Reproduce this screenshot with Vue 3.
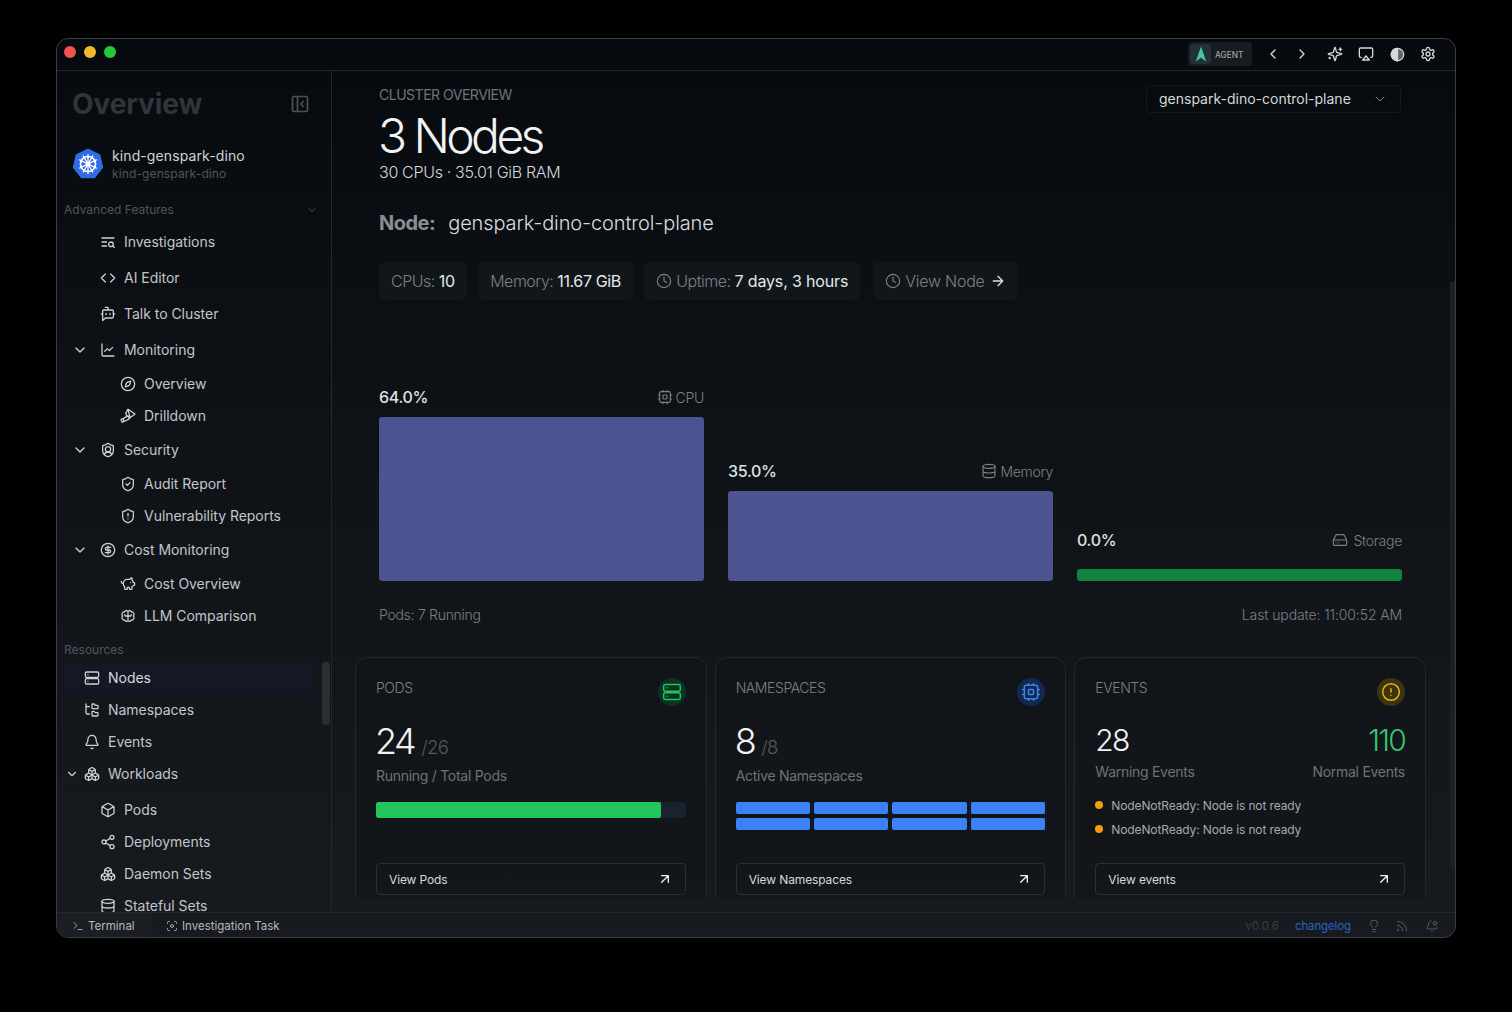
<script setup>
const I = {
  panel: '<rect x="3" y="3" width="18" height="18" rx="2"/><path d="M9 3v18M16 15l-3-3 3-3"/>',
  listSearch: '<path d="M3 6h18M3 12h7M3 18h7"/><circle cx="16.5" cy="15.5" r="3.5"/><path d="M19 18l2.5 2.5"/>',
  code: '<path d="M8 6l-6 6 6 6M16 6l6 6-6 6"/>',
  bot: '<path d="M12 6V2H8M8 18l-4 4V8a2 2 0 0 1 2-2h12a2 2 0 0 1 2 2v8a2 2 0 0 1-2 2ZM2 12h2M9 11v2M15 11v2M20 12h2"/>',
  chart: '<path d="M3 3v16a2 2 0 0 0 2 2h16M7 14l4-4 3 3 5-5"/>',
  compass: '<circle cx="12" cy="12" r="10"/><path d="M16.24 7.76l-1.804 5.411a2 2 0 0 1-1.265 1.265L7.76 16.24l1.804-5.411a2 2 0 0 1 1.265-1.265z"/>',
  telescope: '<path d="M1.500 17l1.500 4.500 3-1.200-1.500-4.400zM4.500 16l1.500 4.300 8-4-2-4.500zM10 11.500L8.500 8 12 2l10.500 7-7.500 5.500z"/><path d="M12 2l3 12.500"/>',
  shieldUser: '<path d="M20 13c0 5-3.500 7.500-7.660 8.950a1 1 0 0 1-.670-.010C7.500 20.500 4 18 4 13V6a1 1 0 0 1 1-1c2 0 4.500-1.200 6.240-2.720a1.170 1.170 0 0 1 1.520 0C14.510 3.810 17 5 19 5a1 1 0 0 1 1 1zM6.376 18.910a6 6 0 0 1 11.249.003"/><circle cx="12" cy="11" r="4"/>',
  shieldCheck: '<path d="M20 13c0 5-3.500 7.500-7.660 8.950a1 1 0 0 1-.670-.010C7.500 20.500 4 18 4 13V6a1 1 0 0 1 1-1c2 0 4.500-1.200 6.240-2.720a1.170 1.170 0 0 1 1.520 0C14.510 3.810 17 5 19 5a1 1 0 0 1 1 1zM9 12l2 2 4-4"/>',
  shieldAlert: '<path d="M20 13c0 5-3.500 7.500-7.660 8.950a1 1 0 0 1-.670-.010C7.500 20.500 4 18 4 13V6a1 1 0 0 1 1-1c2 0 4.500-1.200 6.240-2.720a1.170 1.170 0 0 1 1.520 0C14.510 3.810 17 5 19 5a1 1 0 0 1 1 1zM12 8v4M12 16h.01"/>',
  dollar: '<circle cx="12" cy="12" r="10"/><path d="M16 8h-6a2 2 0 1 0 0 4h4a2 2 0 1 1 0 4H8M12 18V6"/>',
  piggy: '<path d="M11 17h3v2a1 1 0 0 0 1 1h2a1 1 0 0 0 1-1v-3a3.160 3.160 0 0 0 2-2h1a1 1 0 0 0 1-1v-2a1 1 0 0 0-1-1h-1a5 5 0 0 0-2-4V3a4 4 0 0 0-3.200 1.600l-.3.4H11a6 6 0 0 0-6 6v1a5 5 0 0 0 2 4v3a1 1 0 0 0 1 1h2a1 1 0 0 0 1-1zM16 10h.01M2 8v1a2 2 0 0 0 2 2h1"/>',
  brain: '<path d="M12 5a3 3 0 0 0-5 1 3.500 3.500 0 0 0-3 6 3.500 3.500 0 0 0 3 6 3 3 0 0 0 5 1 3 3 0 0 0 5-1 3.500 3.500 0 0 0 3-6 3.500 3.500 0 0 0-3-6 3 3 0 0 0-5-1ZM12 5v14M12 12H8M12 12h4M8 12l-1-2M16 12l1-2"/>',
  server: '<rect x="2" y="3" width="20" height="8" rx="2"/><rect x="2" y="13" width="20" height="8" rx="2"/><path d="M6 7h.01M6 17h.01"/>',
  tree: '<path d="M20 10a1 1 0 0 0 1-1V6a1 1 0 0 0-1-1h-2.500a1 1 0 0 1-.8-.4l-.9-1.200A1 1 0 0 0 15 3h-2a1 1 0 0 0-1 1v5a1 1 0 0 0 1 1ZM20 21a1 1 0 0 0 1-1v-3a1 1 0 0 0-1-1h-2.900a1 1 0 0 1-.880-.550l-.420-.850a1 1 0 0 0-.920-.6H13a1 1 0 0 0-1 1v5a1 1 0 0 0 1 1ZM3 5a2 2 0 0 0 2 2h3M3 3v13a2 2 0 0 0 2 2h3"/>',
  bell: '<path d="M10.268 21a2 2 0 0 0 3.464 0M3.262 15.326A1 1 0 0 0 4 17h16a1 1 0 0 0 .74-1.673C19.410 13.956 18 12.499 18 8A6 6 0 0 0 6 8c0 4.499-1.411 5.956-2.738 7.326"/>',
  boxes: '<path d="M2.970 12.920A2 2 0 0 0 2 14.630v3.240a2 2 0 0 0 .97 1.710l3 1.800a2 2 0 0 0 2.060 0L12 19v-5.500l-5-3-4.030 2.420ZM7 16.500l-4.740-2.850M7 16.500l5-3M7 16.500v5.170M12 13.500V19l3.970 2.380a2 2 0 0 0 2.060 0l3-1.800a2 2 0 0 0 .97-1.710v-3.240a2 2 0 0 0-.97-1.710L17 10.500l-5 3ZM17 16.500l-5-3M17 16.500l4.740-2.850M17 16.500v5.170M7.970 4.420A2 2 0 0 0 7 6.130v4.370l5 3 5-3V6.130a2 2 0 0 0-.97-1.710l-3-1.800a2 2 0 0 0-2.060 0l-3 1.800ZM12 8L7.260 5.150M12 8l4.740-2.850M12 13.500V8"/>',
  box: '<path d="M21 8a2 2 0 0 0-1-1.730l-7-4a2 2 0 0 0-2 0l-7 4A2 2 0 0 0 3 8v8a2 2 0 0 0 1 1.730l7 4a2 2 0 0 0 2 0l7-4A2 2 0 0 0 21 16ZM3.300 7l8.700 5 8.700-5M12 22V12"/>',
  share: '<circle cx="18" cy="5" r="3"/><circle cx="6" cy="12" r="3"/><circle cx="18" cy="19" r="3"/><path d="M8.590 13.510l6.830 3.980M15.410 6.510l-6.820 3.980"/>',
  db: '<ellipse cx="12" cy="5" rx="9" ry="3"/><path d="M3 5v14a9 3 0 0 0 18 0V5M3 12a9 3 0 0 0 18 0"/>',
  cpu: '<rect x="4" y="4" width="16" height="16" rx="2"/><rect x="9" y="9" width="6" height="6" rx="1"/><path d="M15 2v2M15 20v2M2 15h2M2 9h2M20 15h2M20 9h2M9 2v2M9 20v2"/>',
  drive: '<path d="M22 12H2M5.450 5.110L2 12v6a2 2 0 0 0 2 2h16a2 2 0 0 0 2-2v-6l-3.450-6.890A2 2 0 0 0 16.760 4H7.240a2 2 0 0 0-1.790 1.110zM6 16h.01M10 16h.01"/>',
  clock: '<circle cx="12" cy="12" r="10"/><path d="M12 6v6l4 2"/>',
  right: '<path d="M5 12h14M12 5l7 7-7 7"/>',
  upRight: '<path d="M7 7h10v10M7 17L17 7"/>',
  alert: '<circle cx="12" cy="12" r="10"/><path d="M12 8v4M12 16h.01"/>',
  down: '<path d="M6 9l6 6 6-6"/>',
  chevL: '<path d="M15 18l-6-6 6-6"/>',
  chevR: '<path d="M9 18l6-6-6-6"/>',
  sparkles: '<path d="M9.937 15.500A2 2 0 0 0 8.500 14.063l-6.135-1.582a.5.5 0 0 1 0-.962L8.500 9.936A2 2 0 0 0 9.937 8.500l1.582-6.135a.5.5 0 0 1 .963 0L14.063 8.500A2 2 0 0 0 15.500 9.937l6.135 1.581a.5.5 0 0 1 0 .964L15.500 14.063a2 2 0 0 0-1.437 1.437l-1.582 6.135a.5.5 0 0 1-.963 0zM20 3v4M22 5h-4M4 17v2M5 18H3"/>',
  airplay: '<path d="M5 17H4a2 2 0 0 1-2-2V5a2 2 0 0 1 2-2h16a2 2 0 0 1 2 2v10a2 2 0 0 1-2 2h-1M12 15l5 6H7Z"/>',
  contrast: '<circle cx="12" cy="12" r="10" fill="currentColor" fill-opacity=".45"/><path d="M12 2a10 10 0 0 0 0 20z" fill="currentColor"/>',
  gear: '<path d="M12.220 2h-.44a2 2 0 0 0-2 2v.18a2 2 0 0 1-1 1.730l-.43.25a2 2 0 0 1-2 0l-.15-.08a2 2 0 0 0-2.730.73l-.22.38a2 2 0 0 0 .73 2.730l.15.1a2 2 0 0 1 1 1.720v.51a2 2 0 0 1-1 1.740l-.15.09a2 2 0 0 0-.73 2.730l.22.38a2 2 0 0 0 2.730.73l.15-.08a2 2 0 0 1 2 0l.43.25a2 2 0 0 1 1 1.730V20a2 2 0 0 0 2 2h.44a2 2 0 0 0 2-2v-.18a2 2 0 0 1 1-1.730l.43-.25a2 2 0 0 1 2 0l.15.08a2 2 0 0 0 2.730-.73l.22-.39a2 2 0 0 0-.73-2.730l-.15-.08a2 2 0 0 1-1-1.740v-.5a2 2 0 0 1 1-1.740l.15-.09a2 2 0 0 0 .73-2.730l-.22-.38a2 2 0 0 0-2.730-.73l-.15.08a2 2 0 0 1-2 0l-.43-.25a2 2 0 0 1-1-1.730V4a2 2 0 0 0-2-2z"/><circle cx="12" cy="12" r="3"/>',
  terminal: '<path d="M4 17l6-6-6-6M12 19h8"/>',
  scan: '<path d="M3 7V5a2 2 0 0 1 2-2h2M17 3h2a2 2 0 0 1 2 2v2M21 17v2a2 2 0 0 1-2 2h-2M7 21H5a2 2 0 0 1-2-2v-2"/><circle cx="12" cy="12" r="3"/>',
  bulb: '<path d="M15 14c.2-1 .7-1.700 1.500-2.500 1-.9 1.500-2.200 1.500-3.500A6 6 0 0 0 6 8c0 1 .2 2.200 1.500 3.500.7.7 1.300 1.500 1.500 2.500M9 18h6M10 22h4"/>',
  rss: '<path d="M4 11a9 9 0 0 1 9 9M4 4a16 16 0 0 1 16 16"/><circle cx="5" cy="19" r="1"/>',
  bellDot: '<path d="M10.268 21a2 2 0 0 0 3.464 0M11 3.100A6 6 0 0 0 6 8c0 4.499-1.411 5.956-2.738 7.326A1 1 0 0 0 4 17h16a1 1 0 0 0 .74-1.673 13 13 0 0 1-1.600-2"/><circle cx="17" cy="7" r="3"/>'
}

const advanced = [
  { t: 'Investigations', i: 'listSearch', k: 'l1' },
  { t: 'AI Editor', i: 'code', k: 'l1' },
  { t: 'Talk to Cluster', i: 'bot', k: 'l1' },
  { t: 'Monitoring', i: 'chart', k: 'l1', open: true },
  { t: 'Overview', i: 'compass', k: 'l2' },
  { t: 'Drilldown', i: 'telescope', k: 'l2' },
  { t: 'Security', i: 'shieldUser', k: 'l1', open: true },
  { t: 'Audit Report', i: 'shieldCheck', k: 'l2' },
  { t: 'Vulnerability Reports', i: 'shieldAlert', k: 'l2' },
  { t: 'Cost Monitoring', i: 'dollar', k: 'l1', open: true },
  { t: 'Cost Overview', i: 'piggy', k: 'l2' },
  { t: 'LLM Comparison', i: 'brain', k: 'l2' }
]
const resources = [
  { t: 'Nodes', i: 'server', k: 'r1 active' },
  { t: 'Namespaces', i: 'tree', k: 'r1' },
  { t: 'Events', i: 'bell', k: 'r1' },
  { t: 'Workloads', i: 'boxes', k: 'r1 wl', open: true },
  { t: 'Pods', i: 'box', k: 'r2' },
  { t: 'Deployments', i: 'share', k: 'r2' },
  { t: 'Daemon Sets', i: 'boxes', k: 'r2' },
  { t: 'Stateful Sets', i: 'db', k: 'r2' }
]
const chips = [
  { l: 'CPUs:', v: '10' },
  { l: 'Memory:', v: '11.67 GiB' },
  { l: 'Uptime:', v: '7 days, 3 hours', clock: true }
]
const bars = [
  { p: '64.0%', i: 'cpu', n: 'CPU', k: 'cpu' },
  { p: '35.0%', i: 'db', n: 'Memory', k: 'mem' },
  { p: '0.0%', i: 'drive', n: 'Storage', k: 'sto' }
]
</script>

<template>
  <div class="window">
    <header class="titlebar">
      <div class="lights"><i class="dot red"></i><i class="dot yellow"></i><i class="dot green"></i></div>
      <div class="tools">
        <div class="agent">
          <span class="agent-logo">
            <svg viewBox="0 0 16 20" width="12" height="16"><path d="M8 0l7 20-7-5-7 5z" fill="#46c6a4"/></svg>
          </span>
          <span class="agent-t">AGENT</span>
        </div>
        <svg class="ic tb t1" viewBox="0 0 24 24" v-html="I.chevL"></svg>
        <svg class="ic tb t2" viewBox="0 0 24 24" v-html="I.chevR"></svg>
        <svg class="ic tb t3" viewBox="0 0 24 24" v-html="I.sparkles"></svg>
        <svg class="ic tb t4" viewBox="0 0 24 24" v-html="I.airplay"></svg>
        <svg class="ic tb t5" viewBox="0 0 24 24" v-html="I.contrast"></svg>
        <svg class="ic tb t6" viewBox="0 0 24 24" v-html="I.gear"></svg>
      </div>
    </header>

    <div class="body">
      <aside class="sidebar">
        <div class="side-head">
          <span class="side-title">Overview</span>
          <svg class="ic panel" viewBox="0 0 24 24" v-html="I.panel"></svg>
        </div>
        <div class="cluster">
          <svg class="k8s" viewBox="0 0 32 32">
            <path d="M16 .5l12.200 5.900 3 13.200L22.800 30.300H9.200L.8 19.600l3-13.200z" fill="#326ce5"/>
            <g fill="none" stroke="#fff" stroke-width="1.700">
              <circle cx="16" cy="16" r="7.500"/>
              <path d="M16 6v20M7.200 11.600l17.600 8.800M7.200 20.400l17.600-8.800M11 7.500l10 17M21 7.500l-10 17" stroke-width="1.300"/>
            </g>
            <circle cx="16" cy="16" r="2" fill="#fff"/>
          </svg>
          <div class="cluster-t">
            <div class="c1">kind-genspark-dino</div>
            <div class="c2">kind-genspark-dino</div>
          </div>
        </div>
        <div class="group-row">
          <span>Advanced Features</span>
          <svg class="ic gchev" viewBox="0 0 24 24" v-html="I.down"></svg>
        </div>
        <nav class="nav">
          <div v-for="n in advanced" :key="n.t" class="row" :class="n.k">
            <svg v-if="n.open" class="ic caret" viewBox="0 0 24 24" v-html="I.down"></svg>
            <svg class="ic ni" viewBox="0 0 24 24" v-html="I[n.i]"></svg>
            <span>{{ n.t }}</span>
          </div>
        </nav>
        <div class="res-label">Resources</div>
        <nav class="nav">
          <div v-for="n in resources" :key="n.t" class="row" :class="n.k">
            <svg v-if="n.open" class="ic caret" viewBox="0 0 24 24" v-html="I.down"></svg>
            <svg class="ic ni" viewBox="0 0 24 24" v-html="I[n.i]"></svg>
            <span>{{ n.t }}</span>
          </div>
        </nav>
        <div class="side-thumb"></div>
      </aside>

      <main class="main">
        <div class="top">
          <div class="hero">
            <div class="eyebrow">CLUSTER OVERVIEW</div>
            <h1 class="h1">3 Nodes</h1>
            <div class="sub">30 CPUs · 35.01 GiB RAM</div>
          </div>
          <div class="select">
            <span>genspark-dino-control-plane</span>
            <svg class="ic sel-ic" viewBox="0 0 24 24" v-html="I.down"></svg>
          </div>
        </div>
        <div class="node"><b>Node:</b><span>genspark-dino-control-plane</span></div>
        <div class="chips">
          <div v-for="c in chips" :key="c.l" class="chip">
            <svg v-if="c.clock" class="ic chip-ic" viewBox="0 0 24 24" v-html="I.clock"></svg>
            <span>{{ c.l }}</span><em>{{ c.v }}</em>
          </div>
          <div class="chip view">
            <svg class="ic chip-ic" viewBox="0 0 24 24" v-html="I.clock"></svg>
            <span>View Node</span>
            <svg class="ic chip-ar" viewBox="0 0 24 24" v-html="I.right"></svg>
          </div>
        </div>
        <div class="chart">
          <div v-for="b in bars" :key="b.n" class="col" :class="b.k">
            <div class="col-l">
              <b>{{ b.p }}</b>
              <span class="col-n"><svg class="ic col-ic" viewBox="0 0 24 24" v-html="I[b.i]"></svg>{{ b.n }}</span>
            </div>
            <div class="bar"></div>
          </div>
        </div>
        <div class="foot"><span>Pods: 7 Running</span><span class="upd">Last update: 11:00:52 AM</span></div>

        <section class="cards">
          <article class="card">
            <div class="c-head"><span>PODS</span><i class="halo h-green"><svg class="ic" viewBox="0 0 24 24" v-html="I.server"></svg></i></div>
            <div class="big"><strong>24</strong><small>/26</small></div>
            <div class="cap">Running / Total Pods</div>
            <div class="track"><div class="fill"></div></div>
            <button class="btn">View Pods<svg class="ic" viewBox="0 0 24 24" v-html="I.upRight"></svg></button>
          </article>
          <article class="card">
            <div class="c-head"><span>NAMESPACES</span><i class="halo h-blue"><svg class="ic" viewBox="0 0 24 24" v-html="I.cpu"></svg></i></div>
            <div class="big"><strong>8</strong><small>/8</small></div>
            <div class="cap">Active Namespaces</div>
            <div class="ns"><i v-for="n in 8" :key="n"></i></div>
            <button class="btn">View Namespaces<svg class="ic" viewBox="0 0 24 24" v-html="I.upRight"></svg></button>
          </article>
          <article class="card">
            <div class="c-head"><span>EVENTS</span><i class="halo h-yellow"><svg class="ic" viewBox="0 0 24 24" v-html="I.alert"></svg></i></div>
            <div class="ev">
              <div><strong>28</strong><div class="cap ev-c">Warning Events</div></div>
              <div class="ev-r"><strong class="g">110</strong><div class="cap ev-c">Normal Events</div></div>
            </div>
            <ul class="evl">
              <li><i></i>NodeNotReady: Node is not ready</li>
              <li><i></i>NodeNotReady: Node is not ready</li>
            </ul>
            <button class="btn">View events<svg class="ic" viewBox="0 0 24 24" v-html="I.upRight"></svg></button>
          </article>
        </section>
        <div class="main-thumb"></div>
      </main>
    </div>

    <footer class="status">
      <div class="tab on"><svg class="ic st" viewBox="0 0 24 24" v-html="I.terminal"></svg>Terminal</div>
      <div class="tab"><svg class="ic st" viewBox="0 0 24 24" v-html="I.scan"></svg>Investigation Task</div>
      <div class="st-right">
        <span class="ver">v0.0.6</span>
        <span class="log">changelog</span>
        <svg class="ic si s1" viewBox="0 0 24 24" v-html="I.bulb"></svg>
        <svg class="ic si s2" viewBox="0 0 24 24" v-html="I.rss"></svg>
        <svg class="ic si s3" viewBox="0 0 24 24" v-html="I.bellDot"></svg>
      </div>
    </footer>
  </div>
</template>

<style>
html, body { background: #000; margin: 0; }
</style>

<style scoped>
* { box-sizing: border-box; }
.window {
  width: 1400px; height: 900px; margin: 38px auto 0; border: 1px solid #3a3d41; border-radius: 12px;
  overflow: hidden; display: flex; flex-direction: column; position: relative;
  background: linear-gradient(180deg, #060a0f 0%, #0c1015 30%, #11151a 60%, #171a1e 100%);
  font-family: "Inter", "Liberation Sans", sans-serif; color: #c8ccd0;
}
.ic { width: 16px; height: 16px; fill: none; stroke: currentColor; stroke-width: 2; stroke-linecap: round; stroke-linejoin: round; flex: none; display: block; }

.titlebar { height: 32px; flex: none; border-bottom: 1px solid #23272c; display: flex; align-items: center; justify-content: space-between; padding: 0 0 0 7px; }
.lights { display: flex; gap: 8px; margin-top: -5px; }
.dot { width: 12px; height: 12px; border-radius: 50%; display: block; }
.red { background: #f0544c; } .yellow { background: #f6b52e; } .green { background: #24c93f; }
.tools { display: flex; align-items: center; padding: 0 19px 1px 0; color: #d5d8db; }
.agent { width: 64px; height: 24px; background: #181c21; border-radius: 4px; display: flex; align-items: center; gap: 4px; padding-left: 2px; }
.agent-logo { width: 21px; height: 20px; background: #263038; border-radius: 4px; display: flex; align-items: center; justify-content: center; }
.agent-t { font-size: 8.300px; font-weight: 500; color: #9da2a7; padding-top: 2px; }
.t1 { margin-left: 13px; } .t2 { margin-left: 13px; } .t3 { margin-left: 17px; } .t4 { margin-left: 15px; } .t5 { margin-left: 16px; width: 15px; height: 15px; } .t6 { margin-left: 15px; }

.body { flex: 1; min-height: 0; display: flex; }
.sidebar { width: 275px; flex: none; border-right: 1px solid #23272c; overflow: hidden; position: relative; padding: 0 0 0 7px; }
.side-head { height: 66px; display: flex; align-items: center; justify-content: space-between; padding: 0 21px 0 8px; }
.side-title { font-size: 28px; font-weight: 700; color: #30353b; letter-spacing: -.003em; }
.panel { width: 20px; height: 20px; color: #4d5258; }
.cluster { height: 32px; margin-top: 11px; display: flex; align-items: center; gap: 8px; padding-left: 8px; }
.k8s { width: 32px; height: 32px; flex: none; }
.cluster-t { padding-top: 1px; }
.c1 { font-size: 14px; color: #d0d3d6; line-height: 18px; letter-spacing: .1px; }
.c2 { font-size: 12px; color: #50555b; line-height: 18px; letter-spacing: .12px; }
.group-row { height: 20px; margin-top: 20px; display: flex; align-items: center; justify-content: space-between; font-size: 12px; color: #50555b; padding-right: 13px; }
.group-row span { margin-bottom: 2px; }
.gchev { width: 12px; height: 12px; color: #4a4f55; }
.nav { display: flex; flex-direction: column; }
.group-row + .nav { margin-top: 4px; }
.row { display: flex; align-items: center; font-size: 14px; color: #c2c6ca; position: relative; letter-spacing: -.03px; }
.row span { margin-bottom: 2px; }
.ni { width: 16px; height: 16px; margin-right: 8px; stroke-width: 1.900; color: #d0d3d6; }
.caret { position: absolute; width: 16px; height: 16px; left: 8px; color: #d0d3d6; }
.l1 { height: 36px; padding-left: 36px; }
.l2 { height: 32px; padding-left: 56px; }
.res-label { font-size: 12px; color: #50555b; height: 20px; line-height: 20px; margin-top: 8px; margin-bottom: 2px; }
.r1 { height: 32px; padding-left: 20px; margin-right: 17px; }
.r1.active { background: #131824; border-radius: 4px; margin-left: 1px; padding-left: 19px; color: #d5d8db; }
.r1.wl .caret { left: 1px; width: 14px; height: 14px; }
.r1.wl { margin-bottom: 4px; }
.r2 { height: 32px; padding-left: 36px; }
.side-thumb { position: absolute; right: 1px; top: 591px; width: 8px; height: 63px; background: #2b2f34; border-radius: 4px; }

.main { flex: 1; min-width: 0; position: relative; overflow: hidden; padding: 16px 53px 14px 47px; display: flex; flex-direction: column; }
.top { display: flex; justify-content: space-between; align-items: flex-start; }
.eyebrow { font-size: 14px; line-height: 16px; color: #6e7378; letter-spacing: -.035em; }
.h1 { margin: 8px 0 0 -1px; font-size: 48px; line-height: 50px; font-weight: 300; color: #f2f3f4; letter-spacing: -.075em; }
.sub { margin-top: 0; font-size: 16px; line-height: 22px; color: #d5d8db; letter-spacing: -.02em; font-weight: 300; }
.select { width: 255px; height: 28px; margin: -2px 1px 0 0; border: 1px solid #15191e; border-radius: 4px; display: flex; align-items: center; justify-content: space-between; padding: 0 12px 1px; font-size: 14px; color: #d5d8db; }
.sel-ic { width: 16px; height: 16px; color: #7b8085; stroke-width: 1.500; }
.node { margin-top: 26px; height: 28px; display: flex; align-items: center; gap: 13px; font-size: 20px; font-weight: 300; color: #d9dcdf; letter-spacing: -.006em; }
.node b { font-weight: 700; color: #8a8f94; letter-spacing: -.025em; }
.chips { margin-top: 25px; display: flex; gap: 11.500px; }
.chip { height: 38px; background: #11161b; border-radius: 6px; padding: 0 12px; display: flex; align-items: center; font-size: 16px; color: #7b8085; letter-spacing: -.03em; font-weight: 300; }
.chip em { font-style: normal; color: #e6e8ea; margin-left: 4px; font-weight: 400; letter-spacing: -.025em; }
.chip:nth-child(3) em { letter-spacing: -.01em; }
.chip-ic { width: 16px; height: 16px; margin-right: 4px; stroke-width: 1.700; }
.chip-ar { width: 16px; height: 16px; margin-left: 5px; color: #dfe1e4; }
.view { letter-spacing: -.015em; margin-left: 1.500px; }
.chart { margin-top: 85px; height: 196px; display: flex; align-items: flex-end; gap: 24px; }
.col { flex: 1; }
.col-l { height: 24px; display: flex; justify-content: space-between; align-items: center; margin-bottom: 8px; }
.col-l b { font-size: 16px; font-weight: 500; color: #dfe1e4; letter-spacing: -.02em; }
.col-n { display: flex; align-items: center; gap: 3px; font-size: 14px; color: #7b8085; letter-spacing: -.02em; font-weight: 300; }
.col-ic { width: 16px; height: 16px; stroke-width: 1.700; }
.sto .col-n { gap: 5px; }
.bar { border-radius: 3px; background: #4c5391; }
.cpu .bar { height: 164px; } .mem .bar { height: 90px; }
.sto .col-l { margin-bottom: 17px; }
.sto .bar { height: 12px; background: #10843c; }
.foot { margin-top: 23px; height: 20px; display: flex; justify-content: space-between; align-items: center; font-size: 14px; color: #7b8085; letter-spacing: -.02em; font-weight: 300; }
.upd { letter-spacing: -.008em; }

.cards { margin: 33px -24px 0; flex: 1; min-height: 0; display: grid; grid-template-columns: repeat(3, 1fr); column-gap: 8px; overflow: hidden; }
.card { height: 260px; border: 1px solid #24282d; border-radius: 12px; background: rgba(15,17,21,.35); padding: 22px 20px 0; position: relative; }
.c-head { height: 16px; font-size: 14px; line-height: 16px; color: #7b8085; letter-spacing: -.03em; font-weight: 300; position: relative; }
.halo { position: absolute; right: 0; top: -2px; width: 28px; height: 28px; border-radius: 50%; display: flex; align-items: center; justify-content: center; }
.h-green { background: #0c3320; color: #22c55e; }
.h-blue { background: #12294c; color: #3b82f6; }
.h-yellow { background: #3c3310; color: #eab308; }
.halo .ic { width: 20px; height: 20px; stroke-width: 1.800; }
.big { margin-top: 25px; height: 40px; display: flex; align-items: baseline; }
.big strong { margin-left: -1px; font-size: 36px; line-height: 40px; font-weight: 300; color: #f2f3f4; letter-spacing: -.07em; }
.big small { font-size: 18.500px; font-weight: 300; color: #54595e; margin-left: 7px; letter-spacing: -.03em; }
.ev strong { font-size: 30px; line-height: 40px; font-weight: 300; color: #f2f3f4; letter-spacing: -.06em; }
.cap { margin-top: 5px; font-size: 14px; line-height: 20px; color: #6e7378; letter-spacing: -.02em; font-weight: 400; }
.track { margin-top: 16px; height: 16px; border-radius: 2px; background: #1a2230; overflow: hidden; }
.fill { width: 92%; height: 100%; background: #22c55e; border-radius: 2px; }
.ns { margin-top: 16px; display: grid; grid-template-columns: repeat(4, 1fr); gap: 4px; }
.ns i { display: block; height: 12px; background: #3b82f6; border-radius: 2px; }
.ev { margin-top: 24px; display: flex; justify-content: space-between; }
.ev-r { text-align: right; }
.ev strong.g { color: #34c46e; }
.ev-c { margin-top: 2px; }
.evl { list-style: none; margin: 11px 0 0; padding: 0; }
.evl li { height: 24px; display: flex; align-items: center; font-size: 12px; color: #a5a9ad; letter-spacing: -.01em; }
.evl i { width: 8px; height: 8px; border-radius: 50%; background: #f59e0b; margin-right: 8px; }
.btn { position: absolute; left: 20px; right: 20px; top: 205px; height: 32px; background: transparent; border: 1px solid #2b2f34; border-radius: 4px; color: #d5d8db; font: 400 12px "Inter", "Liberation Sans", sans-serif; letter-spacing: -.01em; display: flex; align-items: center; justify-content: space-between; padding: 0 12px; }
.btn .ic { width: 16px; height: 16px; color: #eceef0; }
.main-thumb { position: absolute; right: 0; top: 210px; width: 5px; height: 590px; background: #1c1f23; border-radius: 3px; }

.status { height: 25px; flex: none; border-top: 1px solid #23272c; display: flex; align-items: stretch; font-size: 11.500px; color: #b5b9bd; }
.tab { display: flex; align-items: center; padding: 1px 15px 0; gap: 4px; }
.tab.on { width: 94px; background: #1b1f24; }
.st { width: 12px; height: 12px; stroke-width: 1.700; }
.st-right { margin-left: auto; display: flex; align-items: center; padding: 1px 16px 0 0; }
.ver { color: #3a3f45; }
.log { color: #2a63c4; margin-left: 16px; letter-spacing: -.01em; }
.si { width: 14px; height: 14px; color: #5a5f65; stroke-width: 1.700; }
.s1 { margin-left: 16px; } .s2 { margin-left: 14px; } .s3 { margin-left: 16px; }
</style>
